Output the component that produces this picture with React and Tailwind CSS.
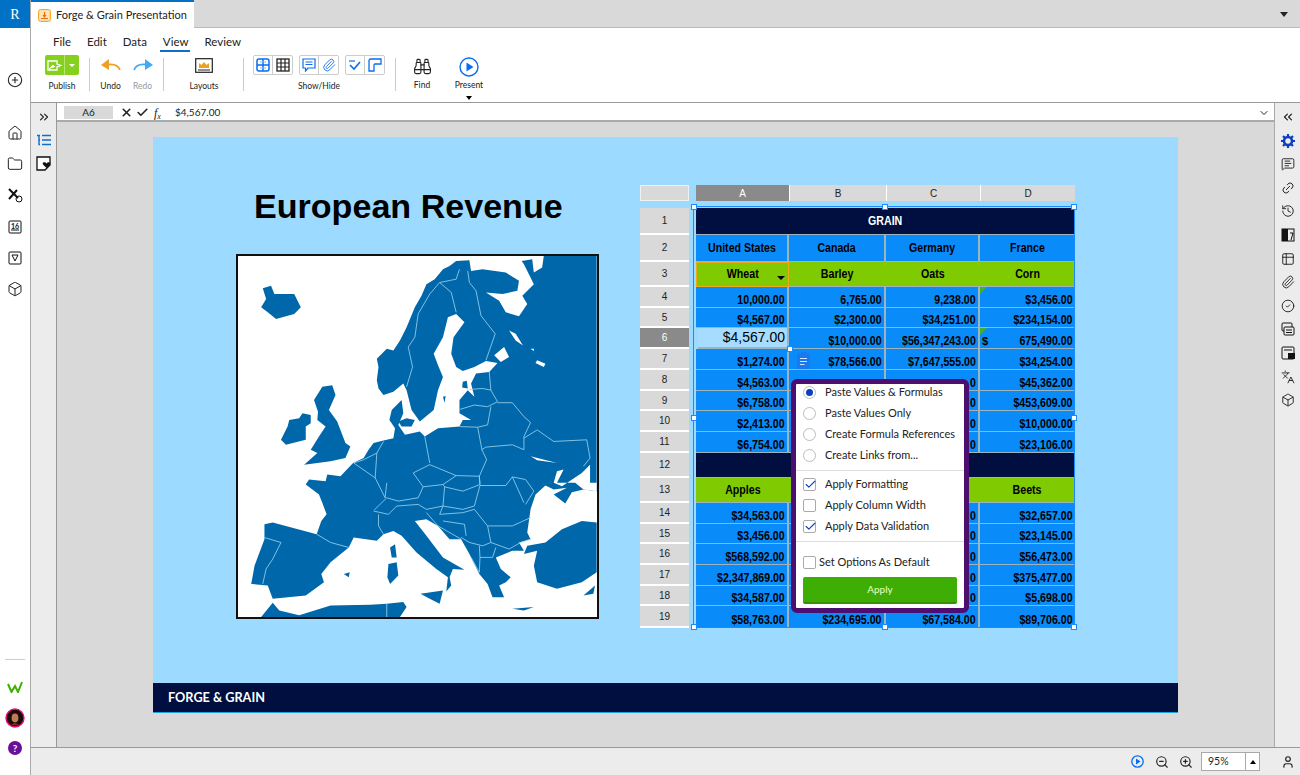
import React from 'react';
import {
  CirclePlus, House, Folder, Box, ChevronsRight, ChevronsLeft, ChevronDown, X, Check,
  MessageSquareText, Link2, History, Paperclip, CircleCheck, ZoomIn, ZoomOut, User, Languages,
  Binoculars, Table2,
} from 'lucide-react';

const rowHeights = 'grid-rows-[27px_27px_25px_21px_20px_21px_21px_21px_20px_21px_21px_25px_25px_21px_20px_21px_21px_20px_22px]';
const lato = "font-['Lato','Open_Sans',sans-serif]";
const arial = "font-['Liberation_Sans',Arial,sans-serif]";
// the sheet's text is squeezed sideways in the picture
const cellText = 'inline-block whitespace-nowrap text-[12.5px] font-bold scale-x-[0.85]';

// rows of the sheet, row 1 and 12 are the navy title bands
// cells under the popup only hold what peeks out next to it
const sheet = [
  { type: 'title', text: 'GRAIN' },
  { type: 'head', cells: ['United States', 'Canada', 'Germany', 'France'] },
  { type: 'green', cells: ['Wheat', 'Barley', 'Oats', 'Corn'] },
  { cells: ['10,000.00', '6,765.00', '9,238.00', '$3,456.00'] },
  { cells: ['$4,567.00', '$2,300.00', '$34,251.00', '$234,154.00'] },
  { cells: ['$4,567.00', '$10,000.00', '$56,347,243.00', '675,490.00'] },
  { cells: ['$1,274.00', '$78,566.00', '$7,647,555.00', '$34,254.00'] },
  { cells: ['$4,563.00', '', '0', '$45,362.00'] },
  { cells: ['$6,758.00', '', '0', '$453,609.00'] },
  { cells: ['$2,413.00', '', '0', '$10,000.00'] },
  { cells: ['$6,754.00', '', '0', '$23,106.00'] },
  { type: 'title', text: '' },
  { type: 'green', cells: ['Apples', '', '', 'Beets'] },
  { cells: ['$34,563.00', '', '0', '$32,657.00'] },
  { cells: ['$3,456.00', '', '0', '$23,145.00'] },
  { cells: ['$568,592.00', '', '0', '$56,473.00'] },
  { cells: ['$2,347,869.00', '', '0', '$375,477.00'] },
  { cells: ['$34,587.00', '', '0', '$5,698.00'] },
  { cells: ['$58,763.00', '$234,695.00', '$67,584.00', '$89,706.00'] },
];

function Cell({ row, col, value }) {
  const isLast = col === 3;
  if (row.type === 'head') {
    return (
      <div className={`flex items-center justify-center bg-[#0a8bfa] border-b border-[#9db3bd] ${isLast ? '' : 'border-r-2'} text-black`}>
        <span className={cellText}>{value}</span>
      </div>
    );
  }
  if (row.type === 'green') {
    const wheat = value === 'Wheat';
    return (
      <div className={`relative flex items-center justify-center bg-[#7fca00] border-b border-[#9db3bd] text-black ${wheat ? 'border border-[#f0a818]' : ''}`}>
        <span className={cellText}>{value}</span>
        {wheat && <span className="absolute right-[3px] bottom-[6px] w-0 h-0 border-x-4 border-t-4 border-x-transparent border-t-black"></span>}
      </div>
    );
  }
  return (
    <div className={`relative flex items-end justify-end pr-[2px] bg-[#0a8bfa] border-b border-[#9db3bd] ${isLast ? '' : 'border-r-2'} text-black leading-[14px]`}>
      <span className={`${cellText} origin-right`}>{value}</span>
    </div>
  );
}

function Spreadsheet() {
  return (
    <div className={`relative ml-[41px] mt-[48px] w-[435px] h-[443px] ${arial}`}>
      <div className="flex h-[16px] text-[10px] text-[#222]">
        <div className="w-[49px] bg-[#d9d9d9] border border-white/60"></div>
        <div className="w-[7px]"></div>
        <div className="w-[93px] bg-[#8a8a8a] text-white flex items-center justify-center">A</div>
        <div className="w-[97px] bg-[#d9d9d9] border-l border-white flex items-center justify-center">B</div>
        <div className="w-[94px] bg-[#d9d9d9] border-l border-white flex items-center justify-center">C</div>
        <div className="w-[95px] bg-[#d9d9d9] border-l border-white flex items-center justify-center">D</div>
      </div>
      <div className="flex mt-[7px]">
        <div className={`grid ${rowHeights} w-[49px] text-[10px] text-[#222]`}>
          {sheet.map((row, i) => (
            <div key={i} className={`flex items-center justify-center border-b-2 border-white ${i === 5 ? 'bg-[#8a8a8a] text-white' : 'bg-[#d9d9d9]'}`}>{i + 1}</div>
          ))}
        </div>
        <div className={`grid ${rowHeights} grid-cols-[93px_97px_94px_95px] ml-[7px] w-[379px]`}>
          {sheet.map((row, r) => {
            if (row.type === 'title') {
              return (
                <div key={r} className="col-span-4 flex items-center justify-center bg-[#000f40] border-b border-[#9db3bd] text-white">
                  <span className={cellText}>{row.text}</span>
                </div>
              );
            }
            return row.cells.map((value, c) => {
              if (r === 5 && c === 0) {
                return <div key={c} className="flex items-center justify-end pr-[2px] ml-[2px] bg-[#a6dcff] border-r-2 border-b-2 border-[#9db3bd] text-[14px] text-black">{value}</div>;
              }
              return (
                <div key={c} className="relative grid">
                  <Cell row={row} col={c} value={value} />
                  {c === 3 && (r === 3 || r === 5) && <svg width="7" height="7" className="absolute left-0 top-0"><path d="M0 0H7L0 7Z" fill="#43b02a" /></svg>}
                  {c === 3 && r === 5 && <span className="absolute left-[2px] bottom-[1px] text-[11px] font-bold leading-[14px] text-black">$</span>}
                </div>
              );
            });
          })}
        </div>
      </div>

      {/* selection frame and handles */}
      <div className="absolute left-[53px] top-[21px] w-[382px] h-[422px] border border-[#1a8cff] pointer-events-none">
        {['left-[-3px] top-[-3px]', 'left-[188px] top-[-3px]', 'right-[-3px] top-[-3px]', 'left-[-3px] top-[208px]', 'right-[-3px] top-[208px]', 'left-[-3px] bottom-[-3px]', 'left-[188px] bottom-[-3px]', 'right-[-3px] bottom-[-3px]'].map((pos) => (
          <span key={pos} className={`absolute ${pos} w-[6px] h-[6px] bg-white border border-[#1a8cff]`}></span>
        ))}
      </div>
      <span className="absolute left-[147px] top-[161px] w-[6px] h-[6px] bg-white border border-[#1a8cff]"></span>

      {/* paste icon */}
      <svg className="absolute left-[157px] top-[167px]" width="13" height="17" viewBox="0 0 13 17">
        <rect x="0" y="1.5" width="13" height="15.5" rx="2" fill="#1a78f0" />
        <rect x="4" y="0" width="5" height="3" rx="1" fill="#1a78f0" />
        <path d="M3 6.5H10M3 9.5H10M3 12.5H7.5" stroke="#cfe6ff" strokeWidth="1.2" />
      </svg>

      <PastePopup />
    </div>
  );
}

function Radio({ on, label }) {
  return (
    <div className="flex items-center h-[21px]">
      <span className="w-[13px] h-[13px] rounded-full border border-[#bbb] bg-white flex items-center justify-center">
        {on && <span className="w-[7px] h-[7px] rounded-full bg-[#0a3fc0]"></span>}
      </span>
      <span className="ml-[9px] whitespace-nowrap">{label}</span>
    </div>
  );
}

function Checkbox({ on, label, gap = 'ml-[9px]' }) {
  return (
    <div className="flex items-center h-[21px]">
      <span className="relative w-[13px] h-[13px] rounded-[2px] border border-[#aaa] bg-white">
        {on && <Check size={13} strokeWidth={2} className="absolute left-0 top-[-1px] text-[#0a3fc0]" />}
      </span>
      <span className={`${gap} whitespace-nowrap`}>{label}</span>
    </div>
  );
}

function PastePopup() {
  return (
    <div className={`absolute left-[151px] top-[194px] w-[178px] h-[234px] rounded-[6px] border-[5px] border-[#4c0f70] bg-white px-[7px] text-[11px] text-[#222] ${lato}`}>
      <div className="-mt-[2px] -mx-[7px] px-[7px] pb-[4px] border-b border-[#ddd]">
        <Radio on label="Paste Values & Formulas" />
        <Radio label="Paste Values Only" />
        <Radio label="Create Formula References" />
        <Radio label="Create Links from..." />
      </div>
      <div className="-mx-[7px] px-[7px] pt-[3px] pb-[4px] border-b border-[#ddd]">
        <Checkbox on label="Apply Formatting" />
        <Checkbox label="Apply Column Width" />
        <Checkbox on label="Apply Data Validation" />
      </div>
      <div className="pt-[10px]">
        <Checkbox label="Set Options As Default" gap="ml-[3px]" />
      </div>
      <div className="mt-[4px] h-[27px] rounded-[2px] bg-[#3fae04] border-b-2 border-[#349204] flex items-center justify-center text-[10px] text-[#eaffc0]">Apply</div>
    </div>
  );
}

function EuropeMap() {
  const borders = [
    'M690,55 L680,85 L630,95 L600,130 L565,190 L555,260 L535,290 L548,350 L530,410',
    'M630,95 L665,125 L680,185',
    'M715,60 L720,95 L740,120 L755,195 L798,250 L770,330',
    'M780,365 L785,420 L805,455 L775,470 L735,465 L692,478',
    'M720,418 L760,415 L785,420',
    'M805,458 L850,458 L885,500 L905,518 L885,560 L885,600 L850,585 L770,592 L757,600',
    'M785,470 L775,525 L745,532 L690,530',
    'M745,532 L758,600 L772,630 L750,680 L752,705',
    'M885,565 L925,540 L975,575 L1075,570 L1085,625 L1065,650',
    'M585,560 L600,640',
    'M600,645 L550,670 L580,712 L640,705 L680,678 L600,645',
    'M680,678 L750,680 L752,705 L700,725 L645,712 L640,705',
    'M640,770 L645,712',
    'M752,708 L830,708 L850,682 L890,690 L915,725 L890,765',
    'M752,708 L735,770 L700,780 L640,770 L630,795',
    'M850,682 L885,760',
    'M580,712 L565,745 L505,755 L470,745 L432,782',
    'M470,700 L465,745 L435,685 L370,640',
    'M435,685 L440,610 L460,575',
    'M370,640 L400,630 L440,610',
    'M430,785 L475,795 L500,770 L565,765 L590,780 L640,770',
    'M445,795 L445,830 L460,855',
    'M590,790 L625,830 L695,870',
    'M630,795 L700,790 L735,780 L775,830 L785,880 L760,890 L720,880 L695,865',
    'M640,815 L705,825 L710,860',
    'M775,830 L850,830 L905,805',
    'M785,880 L840,900 L875,880 L905,870',
    'M750,890 L752,925 L790,925 L800,895',
    'M752,925 L750,970 L725,925',
    'M258,855 L300,880 L355,895',
    'M100,865 L150,880 L125,930 L105,960 L95,1005',
    'M470,1105 L470,1065',
  ];
  return (
    <svg viewBox="20 15 1086 1090" className="block w-full h-full" preserveAspectRatio="none">
      <rect x="20" y="15" width="1086" height="1090" fill="#fff" />
      <g fill="#0068aa">
        <path d="M258,855 L272,815 L288,795 L275,760 L265,735 L225,705 L235,690 L285,695 L290,675 L330,680 L368,640 L400,625 L415,600 L430,580 L460,572 L490,565 L495,535 L478,510 L485,480 L515,450 L520,490 L505,525 L525,555 L570,545 L585,560 L625,535 L690,530 L700,510 L725,510 L690,490 L690,450 L715,420 L735,440 L725,400 L740,370 L780,365 L805,338 L770,332 L735,350 L700,362 L680,350 L665,310 L672,260 L705,215 L680,190 L655,200 L640,260 L612,310 L625,345 L640,380 L625,420 L612,480 L570,515 L545,480 L530,420 L520,400 L490,425 L460,435 L445,415 L440,390 L445,350 L440,325 L470,295 L490,300 L510,270 L530,230 L555,170 L575,135 L590,100 L615,85 L640,55 L660,45 L680,30 L720,28 L725,60 L760,55 L830,65 L870,90 L865,120 L820,130 L770,125 L810,150 L830,185 L870,197 L895,160 L880,135 L915,100 L885,40 L878,30 L910,25 L915,65 L940,50 L945,15 L1105,15 L1105,725 L1065,720 L1030,728 L1010,762 L975,735 L1015,715 L975,720 L950,708 L920,735 L905,780 L895,850 L905,870 L870,880 L885,905 L850,905 L800,925 L815,960 L845,985 L830,1000 L810,1010 L825,1045 L790,1045 L775,1005 L750,975 L720,915 L695,870 L660,870 L625,830 L590,810 L555,815 L590,860 L640,925 L705,962 L670,960 L660,985 L665,1010 L650,1028 L655,985 L620,960 L560,910 L515,860 L490,845 L460,855 L440,875 L370,865 L355,895 L300,940 L272,975 L280,1000 L225,1040 L125,1050 L110,1010 L60,1005 L70,950 L100,870 L100,825 L125,820 Z" />
        <path d="M1105,820 L1060,815 L1000,840 L950,880 L895,890 L885,915 L925,905 L915,950 L925,1000 L985,1020 L1060,1000 L1105,970 Z" />
        <path d="M90,170 L105,145 L95,112 L120,105 L130,130 L190,130 L210,170 L190,190 L135,205 L110,185 Z" />
        <path d="M150,570 L170,530 L175,510 L205,505 L215,490 L240,495 L240,520 L225,530 L225,570 L165,585 Z" />
        <path d="M250,450 L275,410 L305,405 L315,435 L295,480 L320,515 L345,580 L360,590 L345,625 L300,635 L220,645 L260,610 L240,600 L265,560 L285,530 L260,510 L262,485 Z" />
        <path d="M480,895 L495,885 L500,925 L485,925 Z" />
        <path d="M475,945 L500,940 L505,980 L480,1005 L472,985 Z" />
        <path d="M572,1035 L640,1025 L630,1065 L600,1050 Z" />
        <path d="M850,1080 L915,1075 L885,1085 Z" />
        <path d="M505,515 L530,505 L555,510 L545,530 L515,530 Z" />
        <path d="M700,395 L712,392 L715,415 L698,412 Z" />
        <path d="M640,440 L648,438 L645,458 Z" />
        <path d="M340,975 L358,970 L355,985 Z" />
        <path d="M90,1105 L125,1062 L145,1085 L205,1100 L300,1070 L420,1068 L470,1065 L520,1060 L530,1075 L510,1105 Z" />
        <path d="M1065,1040 L1100,1010 L1095,1035 Z" />
      </g>
      <g fill="#fff">
        <path d="M795,315 L825,290 L840,320 L815,335 Z" />
        <path d="M840,240 L860,250 L882,285 L860,270 Z" />
        <path d="M905,295 L915,295 L915,302 Z" />
        <path d="M925,330 L950,340 L945,350 L920,338 Z" />
        <path d="M905,620 L985,640 L925,632 Z" />
        <path d="M1085,645 L1060,670 L1000,710 L975,700 L985,665 L1005,660 L985,700 L1040,700 L1065,720 L1105,725 L1105,700 L1085,700 Z" />
      </g>
      <g fill="none" stroke="#9ad2ee" strokeWidth="2.5" strokeLinejoin="round">
        {borders.map((d) => <path key={d} d={d} />)}
      </g>
    </svg>
  );
}

function ToggleGroup({ children }) {
  return <div className="flex h-[20px] rounded-[2px] border border-[#ccc] divide-x divide-[#ccc]">{children}</div>;
}

function ToggleBtn({ children }) {
  return <span className="w-[19px] flex items-center justify-center">{children}</span>;
}

function RibbonSep({ className = '' }) {
  return <div className={`w-px h-[33px] bg-[#ccc] self-start mt-[3px] ${className}`}></div>;
}

function GridIcon() {
  return <svg width="14" height="14" viewBox="0 0 14 14"><rect x="1" y="1" width="12" height="12" fill="none" stroke="#222" strokeWidth="1.3" /><path d="M1 5H13M1 9H13M5 1V13M9 1V13" stroke="#222" strokeWidth="1.2" /></svg>;
}

function Ribbon() {
  return (
    <div className={`h-[75px] bg-white border-b border-[#999] pl-[14px] text-[#222] ${lato}`}>
      <div className="flex h-[27px] items-center gap-[16px] text-[11.5px] pl-[8px]">
        <span>File</span>
        <span>Edit</span>
        <span>Data</span>
        <span className="relative">View<span className="absolute left-[-3px] right-[-2px] bottom-[-2px] h-[2px] bg-[#0d6ecb]"></span></span>
        <span>Review</span>
      </div>
      <div className="flex text-[8.5px] h-[46px]">
        <div className="w-[34px] flex flex-col items-center">
          <div className="flex w-[34px] h-[20px] rounded-[2px] bg-[#86d01e] divide-x divide-[#b8e66f]">
            <span className="flex-1 flex items-center justify-center">
              <svg width="15" height="11" viewBox="0 0 15 11"><path d="M1 1H10V4L14 5.5L10 7V10H1Z" fill="none" stroke="#fff" strokeWidth="1.3" /><path d="M2 9L6 5L8 7" fill="#fff" stroke="#fff" /></svg>
            </span>
            <span className="w-[14px] flex items-center justify-center"><span className="w-0 h-0 border-x-[3px] border-t-[3px] border-x-transparent border-t-white"></span></span>
          </div>
          <span className="mt-[5px]">Publish</span>
        </div>
        <RibbonSep className="ml-[10px]" />
        <div className="ml-[10px] w-[21px] flex flex-col items-center pt-[4px]">
          <svg width="20" height="14" viewBox="0 0 20 14"><path d="M19 11C17 6 13 5 8 5.5" fill="none" stroke="#f0a020" strokeWidth="1.8" /><path d="M0 6L8 0V11Z" fill="#f0a020" /></svg>
          <span className="mt-[7px]">Undo</span>
        </div>
        <div className="ml-[11px] w-[21px] flex flex-col items-center pt-[4px] text-[#999]">
          <svg width="20" height="14" viewBox="0 0 20 14"><path d="M1 11C3 6 7 5 12 5.5" fill="none" stroke="#45aaf5" strokeWidth="1.8" /><path d="M20 6L12 0V11Z" fill="#45aaf5" /></svg>
          <span className="mt-[7px]">Redo</span>
        </div>
        <RibbonSep className="ml-[10px]" />
        <div className="ml-[25px] w-[30px] flex flex-col items-center pt-[3px]">
          <svg width="18" height="15" viewBox="0 0 18 15"><rect x="0.7" y="0.7" width="16.6" height="13.6" fill="none" stroke="#222" strokeWidth="1.2" /><path d="M4 10V5L6.5 7L9 4L11.5 7L14 5V10Z" fill="#f0a020" /><path d="M3 12H15" stroke="#222" /></svg>
          <span className="mt-[7px]">Layouts</span>
        </div>
        <RibbonSep className="ml-[24px]" />
        <div className="ml-[9px] w-[136px] flex flex-col items-center">
          <div className="flex gap-[6px] self-start">
            <ToggleGroup>
              <ToggleBtn><svg width="14" height="14" viewBox="0 0 14 14"><rect x="1" y="1" width="12" height="12" rx="2" fill="none" stroke="#0a6cf0" strokeWidth="1.5" /><path d="M1 7H13M7 1V13" stroke="#0a6cf0" strokeWidth="1.5" /><path d="M4 4H10M4 10H10" stroke="#7fb8ff" /></svg></ToggleBtn>
              <ToggleBtn><GridIcon /></ToggleBtn>
            </ToggleGroup>
            <ToggleGroup>
              <ToggleBtn><svg width="14" height="14" viewBox="0 0 14 14"><path d="M1 1H13V10H6L3.5 13V10H1Z" fill="none" stroke="#0a6cf0" strokeWidth="1.2" /><path d="M3.5 4H10.5M3.5 6.5H10.5" stroke="#0a6cf0" /></svg></ToggleBtn>
              <ToggleBtn><Paperclip size={14} strokeWidth={1.5} className="text-[#0a6cf0]" /></ToggleBtn>
            </ToggleGroup>
            <ToggleGroup>
              <ToggleBtn><svg width="14" height="14" viewBox="0 0 14 14"><path d="M1 3H7" stroke="#0a6cf0" strokeWidth="1.2" /><path d="M2 7L6 11L12 4" fill="none" stroke="#0a6cf0" strokeWidth="1.6" /></svg></ToggleBtn>
              <ToggleBtn><svg width="14" height="14" viewBox="0 0 14 14"><path d="M1 13V3Q1 1 3 1H13V6H7Q6 6 6 7V13Z" fill="none" stroke="#0a6cf0" strokeWidth="1.3" /></svg></ToggleBtn>
            </ToggleGroup>
          </div>
          <span className="mt-[5px] -ml-[4px]">Show/Hide</span>
        </div>
        <RibbonSep className="ml-[6px]" />
        <div className="ml-[14px] w-[24px] flex flex-col items-center pt-[2px]">
          <Binoculars size={19} strokeWidth={1.4} />
          <span className="mt-[3px]">Find</span>
        </div>
        <div className="ml-[20px] w-[30px] flex flex-col items-center pt-[2px]">
          <svg width="20" height="20" viewBox="0 0 20 20"><circle cx="10" cy="10" r="9" fill="none" stroke="#0a6cf0" strokeWidth="1.4" /><path d="M7.5 5.5L14.5 10L7.5 14.5Z" fill="#0a6cf0" /></svg>
          <span className="mt-[2px]">Present</span>
          <span className="mt-[4px] w-0 h-0 border-x-[3px] border-t-[4px] border-x-transparent border-t-black"></span>
        </div>
      </div>
    </div>
  );
}

function LeftRail() {
  return (
    <div className="w-[31px] shrink-0 h-full bg-white border-r border-[#aaa] flex flex-col items-center text-[#222]">
      <div className="w-[30px] h-[28px] bg-[#0071c5] flex items-center justify-center text-white text-[14px] font-['Liberation_Serif',serif]">R</div>
      <CirclePlus size={16} strokeWidth={1.6} className="mt-[44px]" />
      <div className="flex flex-col items-center gap-[15.2px] mt-[37px]">
        <House size={16} strokeWidth={1.5} />
        <Folder size={16} strokeWidth={1.5} />
        <svg width="16" height="16" viewBox="0 0 16 16"><path d="M2 2L11 11M10 3L2 12" stroke="#111" strokeWidth="2" /><circle cx="12" cy="12" r="3" fill="none" stroke="#111" /></svg>
        <svg width="16" height="16" viewBox="0 0 16 16"><rect x="2" y="2" width="12" height="12" rx="1" fill="none" stroke="#111" /><path d="M4 11H12" stroke="#111" /><text x="8" y="9.5" textAnchor="middle" fontSize="7" fontWeight="700" fill="#111">16</text></svg>
        <svg width="16" height="16" viewBox="0 0 16 16"><rect x="2" y="2" width="12" height="12" rx="1" fill="none" stroke="#111" /><path d="M5 5H11L8 11Z" fill="none" stroke="#111" /></svg>
        <Box size={16} strokeWidth={1.5} />
      </div>
      <div className="mt-auto w-[20px] border-t border-[#ccc] mb-[21px]"></div>
      <svg width="16" height="12" viewBox="0 0 16 12"><path d="M1 3L4.5 11L8 5L11 11L15 1" fill="none" stroke="#3fae04" strokeWidth="2" /></svg>
      <svg width="20" height="20" viewBox="0 0 20 20" className="mt-[15px]"><circle cx="10" cy="10" r="9" fill="#1a0c08" stroke="#e8117f" strokeWidth="1.4" /><ellipse cx="10" cy="10" rx="3.4" ry="4.4" fill="#c07a55" /><path d="M6 17Q10 13 14 17" fill="#7a3020" /></svg>
      <span className="mt-[13px] mb-[20px] w-[14px] h-[14px] rounded-full bg-[#6a0f99] text-white text-[10px] font-bold flex items-center justify-center">?</span>
    </div>
  );
}

function RightRail() {
  return (
    <div className="w-[26px] shrink-0 bg-[#ececec] border-l border-[#aaa] flex flex-col items-center pt-[7px] gap-[9.6px] text-[#222]">
      <ChevronsLeft size={14} />
      <svg width="14" height="14" viewBox="0 0 14 14"><circle cx="7" cy="7" r="4" fill="none" stroke="#0a3fc0" strokeWidth="2.6" /><path d="M7 0V3M7 11V14M0 7H3M11 7H14M2 2L4 4M10 10L12 12M12 2L10 4M2 12L4 10" stroke="#0a3fc0" strokeWidth="2.2" /></svg>
      <MessageSquareText size={14} strokeWidth={1.6} />
      <Link2 size={14} strokeWidth={1.6} className="-rotate-45" />
      <History size={14} strokeWidth={1.6} />
      <svg width="14" height="14" viewBox="0 0 14 14"><rect x="1" y="1" width="12" height="12" fill="none" stroke="#111" /><rect x="1" y="1" width="6" height="12" fill="#111" /><path d="M9 5L12 5L10 12" fill="none" stroke="#111" /></svg>
      <Table2 size={14} strokeWidth={1.6} />
      <Paperclip size={14} strokeWidth={1.6} />
      <CircleCheck size={14} strokeWidth={1.6} />
      <svg width="14" height="14" viewBox="0 0 14 14"><rect x="1" y="1" width="10" height="8" rx="1" fill="none" stroke="#111" /><rect x="3" y="5" width="10" height="8" rx="1" fill="#ececec" stroke="#111" /><path d="M5 8H11M5 10.5H11" stroke="#111" /></svg>
      <svg width="14" height="14" viewBox="0 0 14 14"><rect x="1" y="1" width="12" height="12" rx="1" fill="none" stroke="#111" /><path d="M3 4H11" stroke="#111" /><rect x="7" y="7" width="7" height="6" fill="#111" /></svg>
      <Languages size={14} strokeWidth={1.6} />
      <Box size={14} strokeWidth={1.6} />
    </div>
  );
}

function Slide() {
  return (
    <div className="ml-[96px] mt-[15px] w-[1025px] h-[576px] bg-[#9cdbff] flex flex-col">
      <div className="flex-1 flex">
        <div className="ml-[83px] w-[363px]">
          <h1 className={`mt-[52px] ml-[18px] h-[34px] leading-[34px] text-[34.1px] font-bold text-black whitespace-nowrap ${arial}`}>European Revenue</h1>
          <div className="mt-[31px] w-[363px] h-[365px] border-2 border-[#111]">
            <EuropeMap />
          </div>
        </div>
        <Spreadsheet />
      </div>
      <div className={`h-[30px] bg-[#000f40] border-b border-[#1da1e0] flex items-center pl-[15px] text-white text-[12.7px] font-bold ${lato}`}>FORGE &amp; GRAIN</div>
    </div>
  );
}

export default function App() {
  return (
    <div className={`flex w-[1300px] h-[775px] overflow-hidden ${lato}`}>
      <LeftRail />
      <div className="flex-1 flex flex-col min-w-0">
        <div className="flex h-[28px] bg-[#d9d9d9] border-b border-[#bbb]">
          <div className="w-[163px] h-[28px] bg-white border-t-2 border-[#0071c5] flex items-center pl-[7px] gap-[5px] text-[11px] text-[#222] whitespace-nowrap">
            <svg width="13" height="13" viewBox="0 0 13 13" className="shrink-0"><rect x="0.6" y="0.6" width="11.8" height="11.8" rx="2" fill="#ffe3b0" stroke="#f0a020" /><path d="M3 9.5H10M6.5 3V8M5 6L6.5 8L8 6" fill="none" stroke="#e0701a" strokeWidth="1.2" /></svg>
            Forge &amp; Grain Presentation
          </div>
          <span className="ml-auto mr-[12px] mt-[12px] w-0 h-0 border-x-4 border-t-[5px] border-x-transparent border-t-[#222]"></span>
        </div>
        <Ribbon />
        <div className="flex-1 flex min-h-0">
          <div className="w-[26px] shrink-0 bg-[#ececec] border-r border-[#999] flex flex-col items-center pt-[7px] gap-[9px] text-[#222]">
            <ChevronsRight size={14} />
            <svg width="14" height="14" viewBox="0 0 14 14"><path d="M5 2.5H14M5 7H14M5 11.5H14" stroke="#0d6ecb" strokeWidth="1.4" /><path d="M0 2.5H3M2 2.5V11.5H3M2 7H3" fill="none" stroke="#0d6ecb" strokeWidth="1.4" /></svg>
            <svg width="15" height="15" viewBox="0 0 15 15"><path d="M1 1H14V9L9 14H1Z" fill="#fff" stroke="#111" strokeWidth="1.3" /><path d="M10.5 12L7 8.5Q6 6.5 8 6.3Q9.5 6 10.5 7.5Q11.5 6 13 6.3Q15 6.5 14 8.5Z" fill="#111" /></svg>
          </div>
          <div className="flex-1 flex flex-col min-w-0">
            <div className="h-[19px] pt-[2px] bg-white border-b-2 border-[#aaa] flex items-center text-[10px] text-[#222]">
              <span className="ml-[7px] w-[49px] h-[13px] bg-[#d9d9d9] flex items-center justify-center">A6</span>
              <X size={13} strokeWidth={3} className="ml-[7px]" />
              <Check size={13} strokeWidth={3} className="ml-[3px]" />
              <span className="ml-[5px] w-[12px] italic text-[12px] font-['Liberation_Serif',serif]">f<sub className="text-[8px]">x</sub></span>
              <span className="ml-[9px]">$4,567.00</span>
              <ChevronDown size={12} strokeWidth={2} className="ml-auto mr-[4px]" />
            </div>
            <div className="flex-1 bg-[#d9d9d9] min-h-0">
              <Slide />
            </div>
          </div>
          <RightRail />
        </div>
        <div className="h-[28px] bg-[#ececec] border-t border-[#999] flex items-center text-[#222]">
          <svg width="13" height="13" viewBox="0 0 13 13" className="ml-[1100px]"><circle cx="6.5" cy="6.5" r="5.7" fill="none" stroke="#0a6cf0" strokeWidth="1.3" /><path d="M5 3.5L9.5 6.5L5 9.5Z" fill="#0a6cf0" /></svg>
          <ZoomOut size={14} strokeWidth={2} className="ml-[11px]" />
          <ZoomIn size={14} strokeWidth={2} className="ml-[10px]" />
          <div className="ml-[8px] w-[59px] h-[19px] bg-white border border-[#aaa] flex text-[10.5px]">
            <span className="flex-1 pl-[6px] leading-[17px]">95%</span>
            <span className="w-[14px] border-l border-[#aaa] flex items-center justify-center"><span className="w-0 h-0 border-x-[3.5px] border-b-[4px] border-x-transparent border-b-black"></span></span>
          </div>
          <User size={14} strokeWidth={2} className="ml-[21px]" />
        </div>
      </div>
    </div>
  );
}
